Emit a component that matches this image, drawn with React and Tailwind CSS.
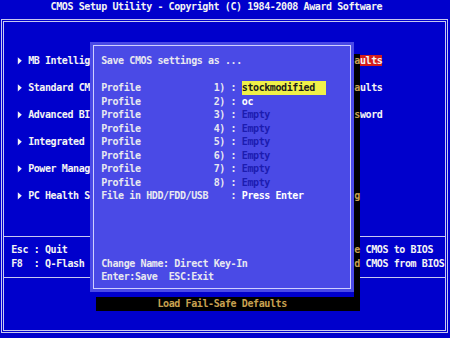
import React from 'react';

const leftItems = [
  'MB Intelligent Tweaker(M.I.T.)',
  'Standard CMOS Features',
  'Advanced BIOS Features',
  'Integrated Peripherals',
  'Power Management Setup',
  'PC Health Status',
];

// right column: [text, index of the char under the dialog shadow]
const rightItems = [
  ['Load Fail-Safe Defaults', 18],
  ['Load Optimized Defaults', 18],
  ['Set Supervisor Password', 18],
  ['Set User Password', -1],
  ['Save & Exit Setup', -1],
  ['Exit Without Saving', 18],
];

const profiles = ['stockmodified', 'oc', 'Empty', 'Empty', 'Empty', 'Empty', 'Empty', 'Empty'];

// splits text so the char at idx sits in the shadow (gold on black)
function Shadowed({ text, idx }) {
  if (idx < 0) return <>{text}</>;
  return (
    <>
      {text.slice(0, idx)}
      <span className="relative bg-black text-[#c8a050]">{text[idx]}</span>
      {text.slice(idx + 1)}
    </>
  );
}

function Arrow() {
  return (
    <svg className="w-[11.24px] h-[13.52px] shrink-0" viewBox="0 0 11.24 13.52">
      <path d="M0.8 3.2 L4.8 6.8 L0.8 10.4 Z" fill="currentColor" />
    </svg>
  );
}

export default function App() {
  return (
    <div className="relative w-[450px] h-[338px] overflow-hidden bg-[#0000cc] text-[#f4f4f4] font-['DejaVu_Sans_Mono',monospace] font-bold text-[10px] tracking-[-0.4px] leading-[13.52px] whitespace-pre">
      {/* right part of the dialog shadow */}
      <div className="absolute left-[354.4px] top-[54.08px] w-[5.62px] h-[243.4px] bg-black" />

      {/* title */}
      <div className="h-[13.52px] pl-[50.6px]">CMOS Setup Utility - Copyright (C) 1984-2008 Award Software</div>

      {/* main frame */}
      <div className="mt-[5px] ml-[1px] mr-[2px] h-[314px] border-[3px] border-double border-[#c8c8f0] flex flex-col">
        {/* menu */}
        <div className="h-[215px] shrink-0 flex border-b border-[#c8c8f0]">
          <div className="w-[221px] pl-[12.9px] pt-[32.6px] flex flex-col gap-[13.52px]">
            {leftItems.map((t) => (
              <div key={t} className="h-[13.52px] flex">
                <Arrow />
                <span>{t}</span>
              </div>
            ))}
          </div>
          <div className="flex-1 pl-[28.1px] pt-[32.6px] flex flex-col gap-[13.52px]">
            {rightItems.map(([t, i], n) => (
              <div key={t} className="h-[13.52px]">
                <span className={n === 0 ? 'bg-[#d41c1c]' : ''}>
                  <Shadowed text={t} idx={i} />
                </span>
              </div>
            ))}
          </div>
        </div>

        {/* help keys */}
        <div className="h-[41px] shrink-0 border-b border-[#c8c8f0] pl-[7.25px] pt-[6.9px] grid grid-cols-[118.1px_174.4px_1fr]">
          <div>{'Esc : Quit\nF8  : Q-Flash'}</div>
          <div>{'\u2191\u2193\u2192\u2190: Select Item\nF10 : Save & Exit Setup'}</div>
          <div>
            <Shadowed text="F11 : Save CMOS to BIOS" idx={9} />
            {'\n'}
            <Shadowed text="F12 : Load CMOS from BIOS" idx={9} />
          </div>
        </div>

        {/* item description, under the shadow */}
        <div className="flex-1 pt-[19.9px] pl-[91.6px]">
          <div className="w-[264.4px] h-[13.52px] bg-black text-[#c8a050] pl-[61.9px]">Load Fail-Safe Defaults</div>
        </div>
      </div>

      {/* save dialog */}
      <div className="absolute left-[90px] top-[42px] w-[264px] h-[250px] bg-[#4a4ae6] p-[3px]">
        <div className="h-full border border-[#d0d0ff] pl-[7.25px] pt-[8.08px] text-[#e8e8f0]">
          <div className="h-[27.04px]">Save CMOS settings as ...</div>
          {profiles.map((p, i) => (
            <div key={i} className="h-[13.52px]">
              {`Profile             ${i + 1}) : `}
              {i === 0 ? (
                <span className="inline-block w-[84.3px] bg-[#f0f048] text-[#1a1a1a]">{p}</span>
              ) : (
                <span className={p === 'Empty' ? 'text-[#1c1cb0]' : 'text-white'}>{p}</span>
              )}
            </div>
          ))}
          <div className="h-[13.52px]">
            {'File in HDD/FDD/USB    : '}
            <span className="text-white">Press Enter</span>
          </div>
          <div className="h-[54.08px]" />
          <div>{'Change Name: Direct Key-In\nEnter:Save  ESC:Exit'}</div>
        </div>
      </div>
    </div>
  );
}
